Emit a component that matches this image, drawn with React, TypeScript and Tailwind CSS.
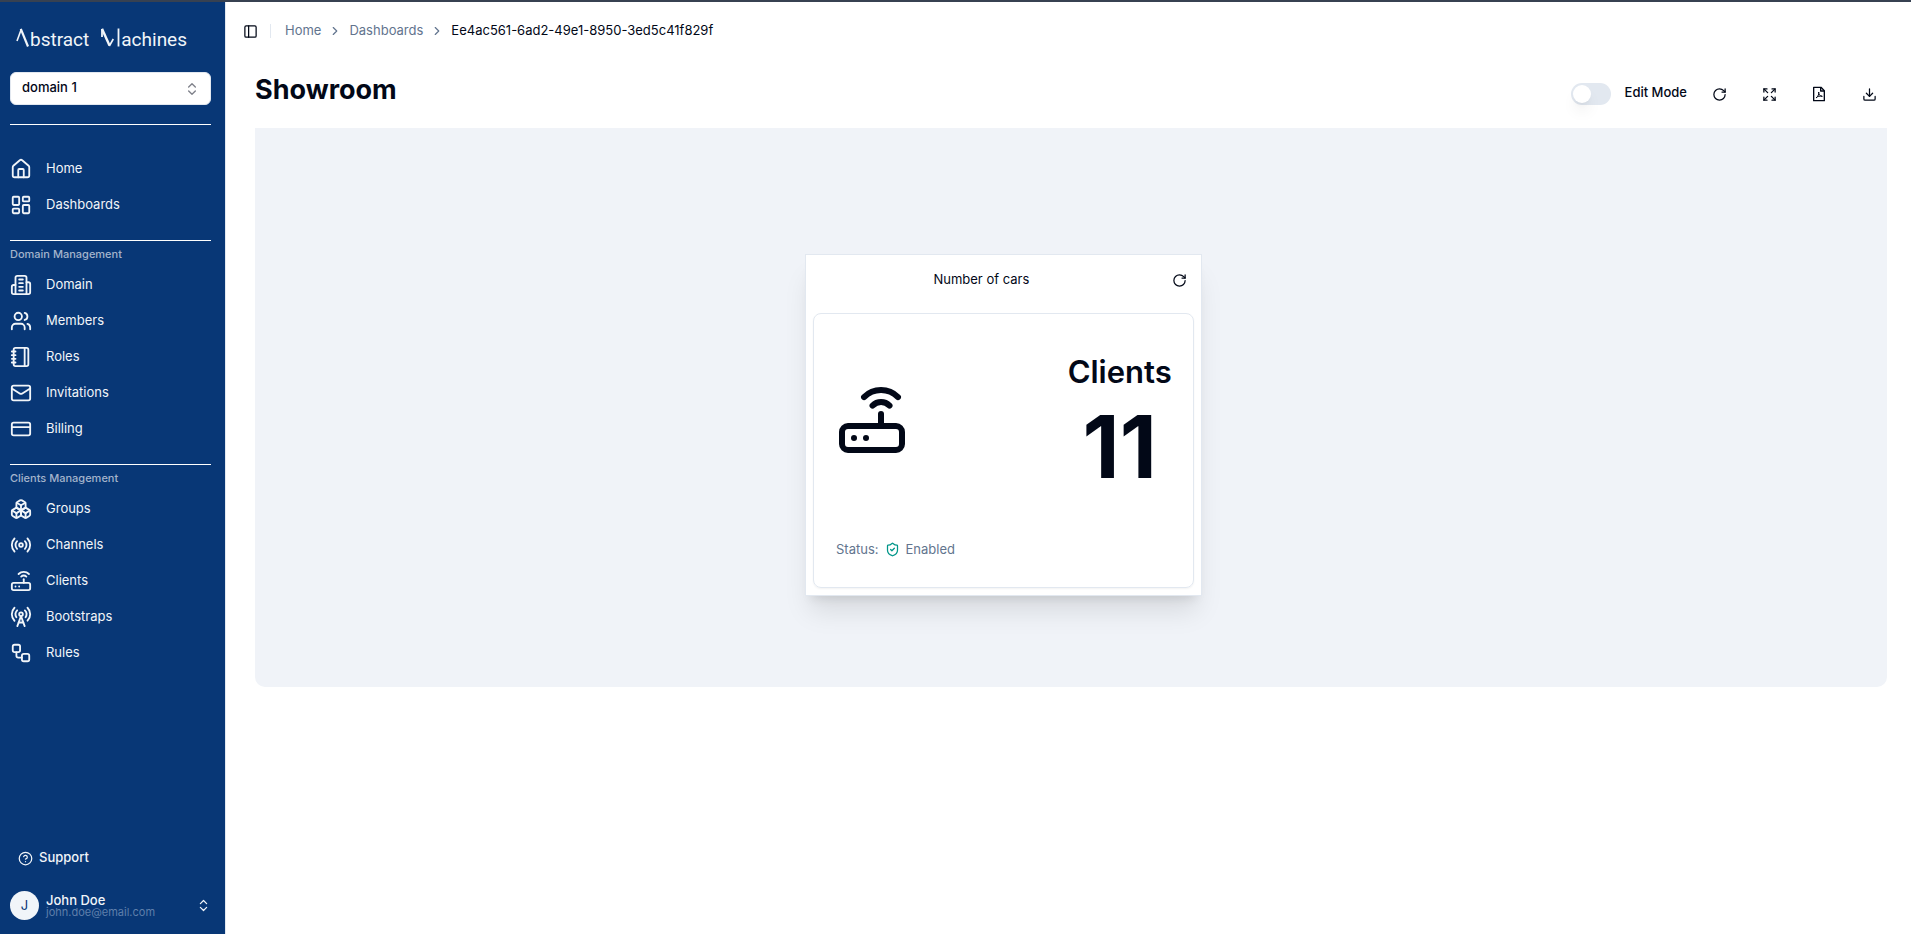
import {
  Boxes, ChevronRight, ChevronsUpDown, CircleHelp, CreditCard, Download, Expand, House,
  LayoutDashboard, Mail, PanelLeft, Radio, RadioTower, RotateCw, Router,
  ShieldCheck, Users, Workflow, type LucideIcon,
} from "lucide-react";
import type { ReactNode } from "react";

type Item = { label: string; icon: ReactNode };

const navIcon = "size-[22px] shrink-0";
const icon = (C: LucideIcon) => <C className={navIcon} />;

function DomainIcon() {
  return (
    <svg viewBox="0 0 24 24" className={navIcon} fill="none" stroke="currentColor" strokeWidth="2" strokeLinecap="round" strokeLinejoin="round" aria-hidden="true">
      <path d="M6 22V4a2 2 0 0 1 2-2h8a2 2 0 0 1 2 2v18Z" />
      <path d="M6 12H4a2 2 0 0 0-2 2v6a2 2 0 0 0 2 2h2" />
      <path d="M18 9h2a2 2 0 0 1 2 2v9a2 2 0 0 1-2 2h-2" />
      <path d="M10 6h4M10 10h4M10 14h4M10 18h4" />
    </svg>
  );
}

function RolesIcon() {
  return (
    <svg viewBox="0 0 24 24" className={navIcon} fill="none" stroke="currentColor" strokeWidth="2" strokeLinecap="round" strokeLinejoin="round" aria-hidden="true">
      <path d="M2 6h4M2 10h4M2 14h4M2 18h4" />
      <rect width="16" height="20" x="4" y="2" rx="2" />
      <path d="M16 2v20" />
    </svg>
  );
}

function PdfIcon() {
  return (
    <svg viewBox="0 0 24 24" className="size-4" fill="none" stroke="currentColor" strokeWidth="2" strokeLinejoin="round" aria-hidden="true">
      <path d="M4 2h11l5 5v15H4z" />
      <path d="M14.5 2v5.500H20" />
      <path strokeWidth="1.5" d="M11.500 9c1.300 2.500-1 6.500-4 9M11.500 9c-.8 3.500 2 6 5.500 6.500M7.500 18c2-2.500 6-3.500 9.500-2.500" />
    </svg>
  );
}

const mainItems: Item[] = [
  { label: "Home", icon: icon(House) },
  { label: "Dashboards", icon: icon(LayoutDashboard) },
];
const domainItems: Item[] = [
  { label: "Domain", icon: <DomainIcon /> },
  { label: "Members", icon: icon(Users) },
  { label: "Roles", icon: <RolesIcon /> },
  { label: "Invitations", icon: icon(Mail) },
  { label: "Billing", icon: icon(CreditCard) },
];
const clientItems: Item[] = [
  { label: "Groups", icon: icon(Boxes) },
  { label: "Channels", icon: icon(Radio) },
  { label: "Clients", icon: icon(Router) },
  { label: "Bootstraps", icon: icon(RadioTower) },
  { label: "Rules", icon: icon(Workflow) },
];

function NavList({ items }: { items: Item[] }) {
  return (
    <ul>
      {items.map((it) => (
        <li key={it.label}>
          <a href="#" className="flex h-9 items-center gap-[14px] text-[13px] leading-[18px]">
            {it.icon}
            <span className="pb-[2px]">{it.label}</span>
          </a>
        </li>
      ))}
    </ul>
  );
}

function Group({ title, items }: { title: string; items: Item[] }) {
  return (
    <section className="mt-[17px] border-t border-white pt-[3px]">
      <h2 className="mb-[3px] flex h-5 items-center text-[11px] font-medium text-[#a4b4cc]">{title}</h2>
      <NavList items={items} />
    </section>
  );
}

function Logo() {
  return (
    <div className="flex h-6 items-start pl-1.5 font-[Roboto,sans-serif] text-[19px] leading-6" role="img" aria-label="Abstract Machines">
      <svg viewBox="0 0 14 20" className="h-5 w-[14px]" fill="none" stroke="currentColor">
        <path d="M1 13 5.200 1.500" strokeWidth="1.6" />
        <path d="M4.800 .8 12 18.500" strokeWidth="2.2" />
      </svg>
      <span>bstract</span>
      <svg viewBox="0 0 20 20" className="ml-3 h-5 w-5" fill="none" stroke="currentColor">
        <path d="M1 9V1" strokeWidth="1.8" />
        <path d="M1 .8 8.500 17.500" strokeWidth="2.4" />
        <path d="m8.300 18 4-7" strokeWidth="1.6" />
        <path d="M17.500 .5v18" strokeWidth="1.8" />
      </svg>
      <span>achines</span>
    </div>
  );
}

function Sidebar() {
  return (
    <aside className="flex w-[226px] shrink-0 flex-col border-r border-slate-200 bg-[#083776] pr-[14px] pl-[10px] text-slate-100">
      <div className="pt-[26px]">
        <Logo />
      </div>
      <button type="button" className="mt-5 flex h-[33px] items-center justify-between rounded-md border border-slate-200 bg-white pr-[10px] pl-[11px] text-[13px] font-medium text-slate-950">
        <span className="pb-px">domain 1</span>
        <ChevronsUpDown className="size-4 opacity-50" />
      </button>
      <nav className="mt-[19px] border-t border-white pt-[26px]">
        <NavList items={mainItems} />
        <Group title="Domain Management" items={domainItems} />
        <Group title="Clients Management" items={clientItems} />
      </nav>
      <div className="mt-auto pb-[14px]">
        <a href="#" className="flex h-9 items-center gap-1.5 pl-2 text-[13px] font-medium">
          <CircleHelp className="size-[15px]" />
          Support
        </a>
        <button type="button" className="mt-[15px] flex w-full items-center gap-[7px] text-left">
          <span className="flex size-[29px] items-center justify-center rounded-full bg-slate-100 text-[13px] text-[#083776]">J</span>
          <span className="flex flex-1 flex-col pb-px">
            <span className="text-[13px] leading-[13px] font-medium">John Doe</span>
            <span className="text-[11px] leading-[10px] text-[#5f7fab]">john.doe@email.com</span>
          </span>
          <ChevronsUpDown className="size-[15px]" />
        </button>
      </div>
    </aside>
  );
}

function IconButton({ label, children }: { label: string; children: ReactNode }) {
  return (
    <button type="button" aria-label={label} className="flex h-8 w-9 items-center justify-center">
      {children}
    </button>
  );
}

export default function App() {
  return (
    <div className="flex min-h-screen flex-col border-t-2 border-[#374151] bg-white font-[Inter,sans-serif] text-[#020817]">
      <div className="flex flex-1">
        <Sidebar />
        <main className="min-w-0 flex-1">
          <header className="flex h-[58px] items-center pl-[17px] text-[13px]">
            <button type="button" aria-label="Toggle sidebar">
              <PanelLeft className="size-[15px]" />
            </button>
            <span className="ml-3 h-[14px] w-px bg-slate-200" />
            <nav aria-label="Breadcrumb" className="ml-[14px]">
              <ol className="flex items-center gap-[7px] text-slate-500">
                <li><a href="#">Home</a></li>
                <li aria-hidden="true"><ChevronRight className="size-[14px]" /></li>
                <li><a href="#">Dashboards</a></li>
                <li aria-hidden="true"><ChevronRight className="size-[14px]" /></li>
                <li aria-current="page" className="text-[#020817]">Ee4ac561-6ad2-49e1-8950-3ed5c41f829f</li>
              </ol>
            </nav>
          </header>
          <div className="pr-6 pl-[29px]">
            <div className="flex h-[68px] items-start justify-between">
              <h1 className="mt-[14px] text-[27px] leading-8 font-bold">Showroom</h1>
              <div className="mt-[18px] flex items-center">
                <label className="flex items-center text-[13px] font-medium">
                  <input type="checkbox" role="switch" className="peer sr-only" />
                  <span className="mr-[14px] flex h-[22px] w-10 items-center rounded-full bg-slate-200 px-[2px] peer-checked:justify-end peer-checked:bg-[#083776]">
                    <span className="size-[18px] rounded-full bg-white shadow-lg" />
                  </span>
                  <span className="pb-[2px]">Edit Mode</span>
                </label>
                <div className="ml-[14px] flex gap-[14px]">
                  <IconButton label="Refresh"><RotateCw className="size-[15px]" /></IconButton>
                  <IconButton label="Fullscreen"><Expand className="size-[15px]" /></IconButton>
                  <IconButton label="Export PDF"><PdfIcon /></IconButton>
                  <IconButton label="Download"><Download className="size-[15px]" /></IconButton>
                </div>
              </div>
            </div>
            <section className="grid min-h-[559px] grid-cols-12 content-start gap-[9px] rounded-b-[10px] bg-[#f0f3f8] p-[9px]">
              <article className="col-span-3 col-start-5 mt-[117px] flex h-[342px] flex-col border border-slate-200 bg-white px-[7px] pb-[7px] shadow-xl">
                <div className="flex h-[50px] items-center">
                  <h2 className="flex-1 pr-[22px] text-center text-[13px]">Number of cars</h2>
                  <button type="button" aria-label="Refresh widget" className="mr-[7px]">
                    <RotateCw className="size-[15px]" />
                  </button>
                </div>
                <div className="mt-2 flex flex-1 flex-col rounded-lg border border-slate-200 pt-9 pr-[21px] pl-[22px] shadow-xs">
                  <div className="flex items-start justify-between">
                    <Router className="mt-[34px] size-[72px]" />
                    <div className="flex flex-col items-center">
                      <span className="text-[31px] leading-[44px] font-semibold">Clients</span>
                      <span className="text-[86px] leading-[106px] font-bold">11</span>
                    </div>
                  </div>
                  <p className="mt-10 flex items-center text-[13px] text-slate-500">
                    Status:
                    <ShieldCheck className="mx-1.5 size-[15px] text-teal-600" />
                    Enabled
                  </p>
                </div>
              </article>
            </section>
          </div>
        </main>
      </div>
    </div>
  );
}
